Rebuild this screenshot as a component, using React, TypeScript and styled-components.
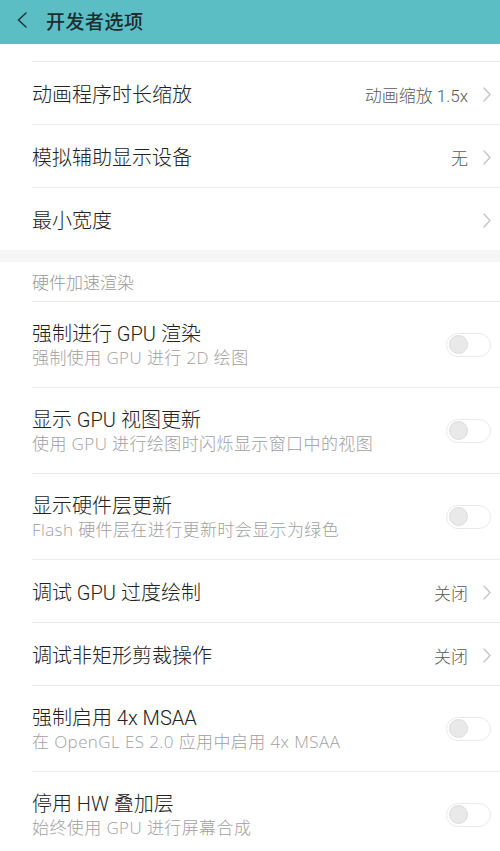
import React from 'react';
import styled, { createGlobalStyle } from 'styled-components';

const GlobalStyle = createGlobalStyle`
  html, body {
    margin: 0;
    padding: 0;
    background: #ffffff;
  }
  body {
    font-family: Roboto, "Noto Sans CJK SC", "Liberation Sans", sans-serif;
    -webkit-font-smoothing: antialiased;
  }
`;

const Page = styled.div`
  width: 500px;
  min-height: 851px;
  background: #ffffff;
  overflow: hidden;
`;

const TopBar = styled.header`
  height: 44px;
  background: #5cbec5;
  display: flex;
  align-items: center;
  padding: 0 0 4px 17px;
  box-sizing: border-box;
  gap: 19px;
`;

const BarTitle = styled.h1`
  margin: 0;
  font-family: "Noto Sans CJK SC", sans-serif;
  font-size: 19px;
  font-weight: 500;
  color: #1c2e30;
  letter-spacing: 0.5px;
`;

const TopGap = styled.div`
  height: 17px;
`;

const Band = styled.div`
  height: 12px;
  background: #f5f5f5;
`;

const SectionLabel = styled.div`
  height: 39px;
  margin-left: 32px;
  display: flex;
  align-items: center;
  font-size: 17px;
  font-weight: 300;
  color: #9a9a9a;
`;

const Row = styled.div<{ $tall?: boolean }>`
  margin-left: 32px;
  height: ${p => (p.$tall ? 86 : 63)}px;
  border-top: 1px solid #ebebeb;
  box-sizing: border-box;
  display: flex;
  align-items: center;
  justify-content: space-between;
  padding-right: 9px;
`;

const TextBlock = styled.div`
  display: flex;
  flex-direction: column;
  padding-top: 3px;
`;

const Title = styled.div`
  font-size: 20px;
  line-height: 24px;
  font-weight: 300;
  color: #222222;
`;

const Subtitle = styled.div`
  font-family: "Open Sans", "Noto Sans CJK SC", sans-serif;
  font-size: 17px;
  line-height: 24px;
  font-weight: 300;
  letter-spacing: 0.4px;
  color: #9f9f9f;
`;

const Trail = styled.div`
  display: flex;
  align-items: center;
  gap: 15px;
  padding-top: 2px;
`;

const Value = styled.span`
  font-size: 17px;
  font-weight: 300;
  color: #5a5a5a;
`;

const Track = styled.div`
  width: 45px;
  height: 24px;
  border-radius: 12px;
  border: 1.5px solid #e9e9e9;
  box-sizing: border-box;
  background: #ffffff;
  display: flex;
  align-items: center;
  padding-left: 2px;
`;

const Knob = styled.div`
  width: 19px;
  height: 19px;
  border-radius: 50%;
  background: #e9e9e9;
  border: 1px solid #dcdcdc;
  box-sizing: border-box;
`;

const Chevron = ({ color = '#c4c4c4', w = 8, h = 15, sw = 1.3 }: { color?: string; w?: number; h?: number; sw?: number }) => (
  <svg width={w} height={h} viewBox={`0 0 ${w} ${h}`} fill="none">
    <path d={`M1 1 L${w - 1} ${h / 2} L1 ${h - 1}`} stroke={color} strokeWidth={sw} strokeLinecap="round" strokeLinejoin="round" />
  </svg>
);

const BackArrow = () => (
  <svg width="10" height="16" viewBox="0 0 10 16" fill="none">
    <path d="M9 1 L1.5 8 L9 15" stroke="#1f3537" strokeWidth="1.5" strokeLinecap="round" strokeLinejoin="round" />
  </svg>
);

const Toggle = () => (
  <Track>
    <Knob />
  </Track>
);

type Item = {
  title: string;
  sub?: string;
  value?: string;
  toggle?: boolean;
};

const firstGroup: Item[] = [
  { title: '动画程序时长缩放', value: '动画缩放 1.5x' },
  { title: '模拟辅助显示设备', value: '无' },
  { title: '最小宽度', value: '' },
];

const hwGroup: Item[] = [
  { title: '强制进行 GPU 渲染', sub: '强制使用 GPU 进行 2D 绘图', toggle: true },
  { title: '显示 GPU 视图更新', sub: '使用 GPU 进行绘图时闪烁显示窗口中的视图', toggle: true },
  { title: '显示硬件层更新', sub: 'Flash 硬件层在进行更新时会显示为绿色', toggle: true },
  { title: '调试 GPU 过度绘制', value: '关闭' },
  { title: '调试非矩形剪裁操作', value: '关闭' },
  { title: '强制启用 4x MSAA', sub: '在 OpenGL ES 2.0 应用中启用 4x MSAA', toggle: true },
  { title: '停用 HW 叠加层', sub: '始终使用 GPU 进行屏幕合成', toggle: true },
];

const SettingRow = ({ item }: { item: Item }) => (
  <Row $tall={!!item.sub}>
    <TextBlock>
      <Title>{item.title}</Title>
      {item.sub && <Subtitle>{item.sub}</Subtitle>}
    </TextBlock>
    {item.toggle ? (
      <Toggle />
    ) : (
      <Trail>
        {item.value && <Value>{item.value}</Value>}
        <Chevron />
      </Trail>
    )}
  </Row>
);

export default function App() {
  return (
    <Page>
      <GlobalStyle />
      <TopBar>
        <BackArrow />
        <BarTitle>开发者选项</BarTitle>
      </TopBar>
      <TopGap />
      {firstGroup.map(it => (
        <SettingRow key={it.title} item={it} />
      ))}
      <Band />
      <SectionLabel>硬件加速渲染</SectionLabel>
      {hwGroup.map(it => (
        <SettingRow key={it.title} item={it} />
      ))}
    </Page>
  );
}
